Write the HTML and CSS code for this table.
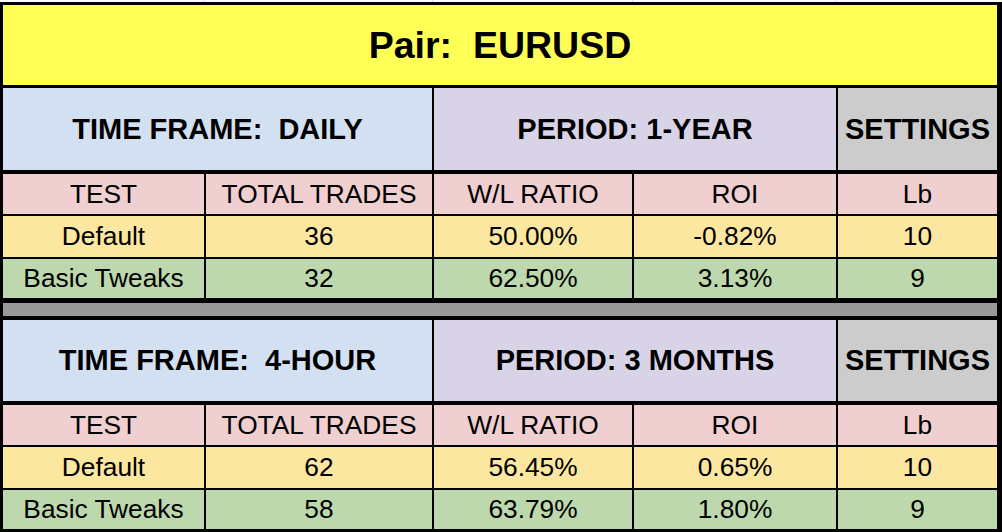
FILE: index.html
```html
<!DOCTYPE html>
<html>
<head>
<meta charset="utf-8">
<link rel="stylesheet" href="styles.css">
</head>
<body>
<div class="gridtop"><span></span><span></span><span></span><span></span><span></span></div>
<div class="sheet">
  <div class="title">Pair:&nbsp; EURUSD</div>

  <div class="head">
    <div class="c blue">TIME FRAME:&nbsp; DAILY</div>
    <div class="c purple">PERIOD: 1-YEAR</div>
    <div class="c grey">SETTINGS</div>
  </div>
  <div class="row pink">
    <div class="c">TEST</div><div class="c">TOTAL TRADES</div><div class="c">W/L RATIO</div><div class="c">ROI</div><div class="c">Lb</div>
  </div>
  <div class="row yellow">
    <div class="c">Default</div><div class="c">36</div><div class="c">50.00%</div><div class="c">-0.82%</div><div class="c">10</div>
  </div>
  <div class="row green">
    <div class="c">Basic Tweaks</div><div class="c">32</div><div class="c">62.50%</div><div class="c">3.13%</div><div class="c">9</div>
  </div>

  <div class="band"></div>

  <div class="head head2">
    <div class="c blue">TIME FRAME:&nbsp; 4-HOUR</div>
    <div class="c purple">PERIOD: 3 MONTHS</div>
    <div class="c grey">SETTINGS</div>
  </div>
  <div class="row pink">
    <div class="c">TEST</div><div class="c">TOTAL TRADES</div><div class="c">W/L RATIO</div><div class="c">ROI</div><div class="c">Lb</div>
  </div>
  <div class="row yellow">
    <div class="c">Default</div><div class="c">62</div><div class="c">56.45%</div><div class="c">0.65%</div><div class="c">10</div>
  </div>
  <div class="row green">
    <div class="c">Basic Tweaks</div><div class="c">58</div><div class="c">63.79%</div><div class="c">1.80%</div><div class="c">9</div>
  </div>
</div>
</body>
</html>
```

FILE: styles.css
```css
html, body {
  margin: 0;
  padding: 0;
  background: #ffffff;
  font-family: "Liberation Sans", Arial, sans-serif;
  color: #000;
}
body {
  width: 1002px;
  height: 532px;
  overflow: hidden;
}
.gridtop {
  height: 2px;
  display: grid;
  grid-template-columns: 205px 228px 200px 204px 165px;
}
.gridtop span {
  border-right: 1px solid #e2e2e2;
}
.sheet {
  background: #000;
  padding: 3px 5px 4px 3px;
  display: flex;
  flex-direction: column;
}
.title {
  height: 80px;
  margin-bottom: 3px;
  background: #ffff55;
  display: flex;
  align-items: center;
  justify-content: center;
  font-weight: bold;
  font-size: 37.5px;
  padding-top: 1px;
  box-sizing: border-box;
}
.head {
  display: grid;
  grid-template-columns: 429px 402px 159px;
  column-gap: 2px;
  height: 82px;
  margin-bottom: 4px;
  font-weight: bold;
  font-size: 29px;
}
.head2 {
  height: 81px;
}
.c {
  display: flex;
  align-items: center;
  justify-content: center;
  white-space: nowrap;
}
.blue { background: #d3e0f1; }
.purple { background: #d9d3e8; }
.grey { background: #cccccc; }
.row {
  display: grid;
  grid-template-columns: 201px 226px 198px 202px 159px;
  column-gap: 2px;
  height: 40px;
  font-size: 26.3px;
}
.row + .row {
  margin-top: 2px;
}
.row.yellow { height: 41px; }
.row.green { height: 39px; }
.pink .c { background: #efcfcf; }
.yellow .c { background: #fce7a0; }
.green .c { background: #bed8ad; }
.band {
  height: 13px;
  margin: 5px 0 4px;
  background: #999999;
}
```
